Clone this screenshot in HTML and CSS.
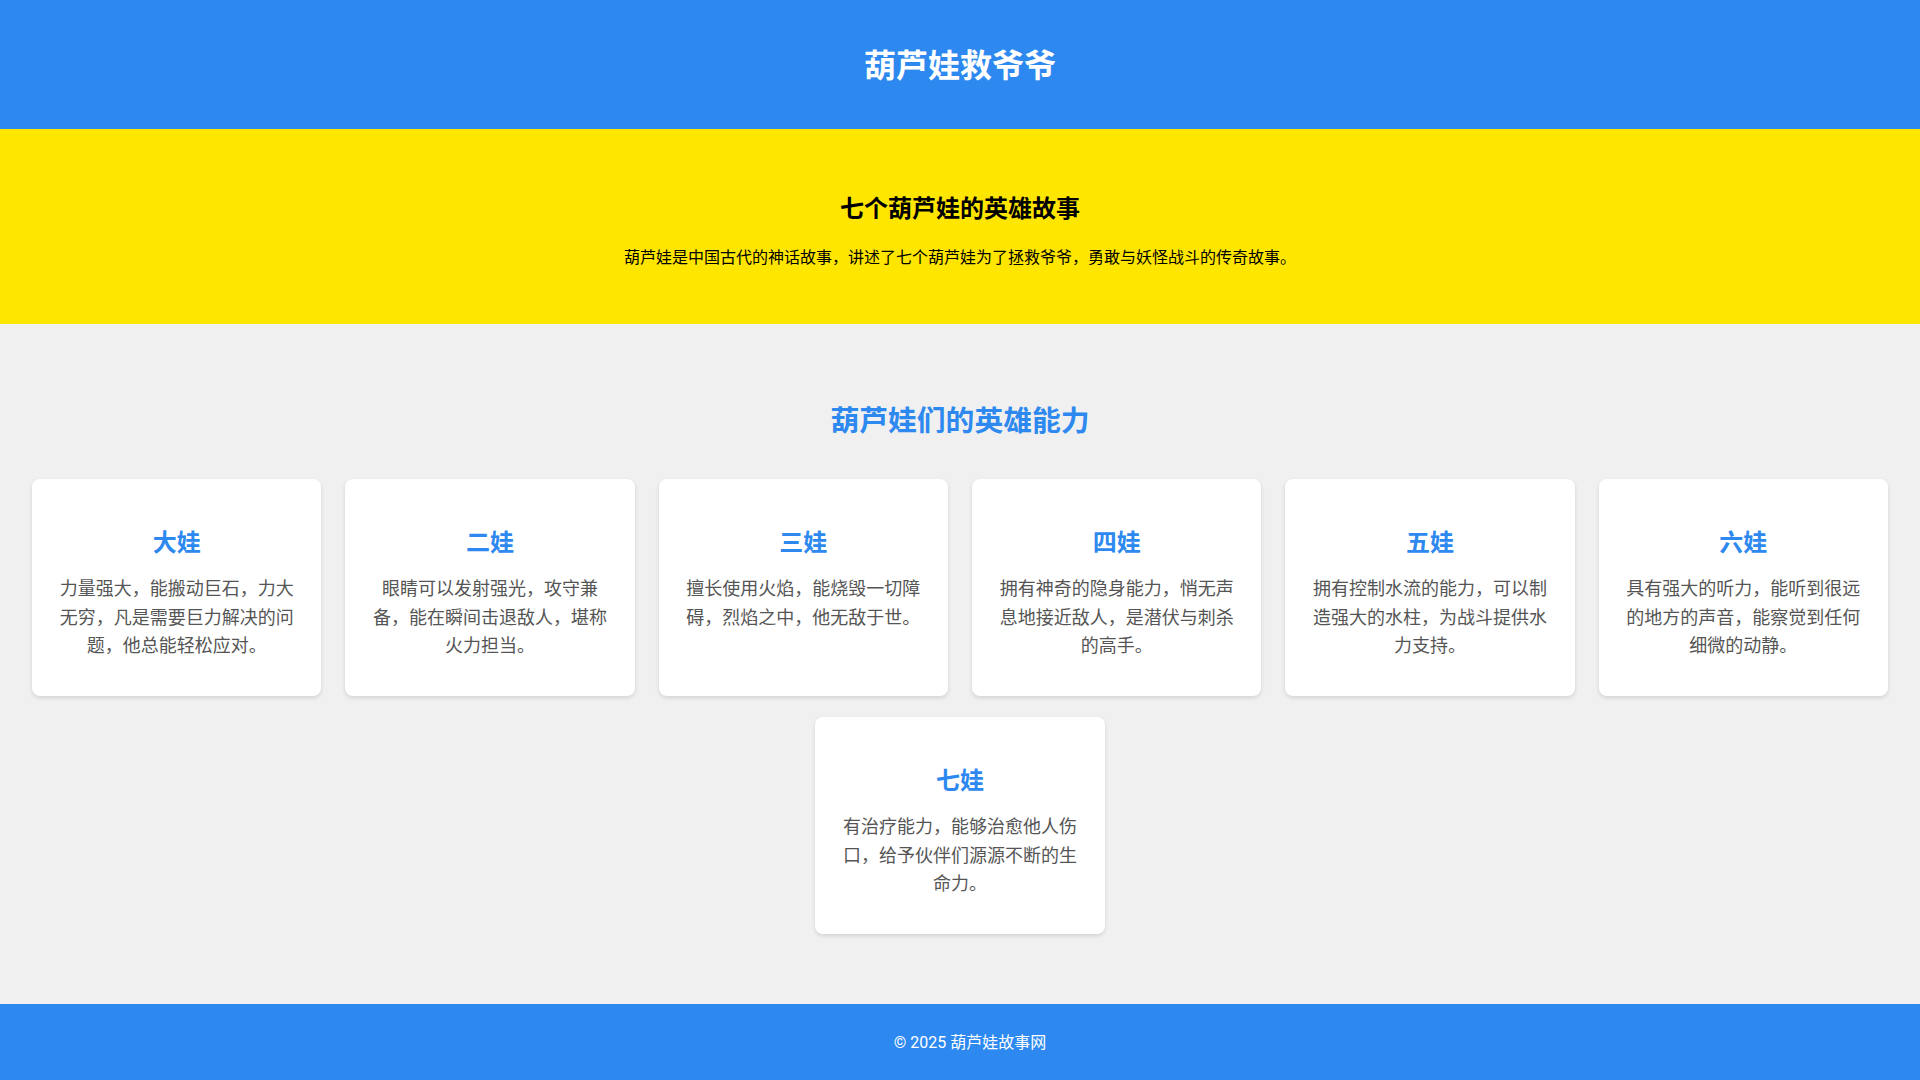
FILE: index.html
```html
<!DOCTYPE html>
<html lang="zh-CN">
<head>
  <meta charset="UTF-8">
  <meta name="viewport" content="width=device-width, initial-scale=1.0">
  <title>葫芦娃救爷爷</title>
  <link rel="stylesheet" href="styles.css">
</head>
<body>

<header class="site-header">
  <h1>葫芦娃救爷爷</h1>
</header>

<!-- Intro banner -->
<section class="intro">
  <h2>七个葫芦娃的英雄故事</h2>
  <p>葫芦娃是中国古代的神话故事，讲述了七个葫芦娃为了拯救爷爷，勇敢与妖怪战斗的传奇故事。</p>
</section>

<!-- Abilities -->
<section class="abilities">
  <h2>葫芦娃们的英雄能力</h2>
  <div class="card-list">
    <div class="card">
      <h3>大娃</h3>
      <p>力量强大，能搬动巨石，力大无穷，凡是需要巨力解决的问题，他总能轻松应对。</p>
    </div>
    <div class="card">
      <h3>二娃</h3>
      <p>眼睛可以发射强光，攻守兼备，能在瞬间击退敌人，堪称火力担当。</p>
    </div>
    <div class="card">
      <h3>三娃</h3>
      <p>擅长使用火焰，能烧毁一切障碍，烈焰之中，他无敌于世。</p>
    </div>
    <div class="card">
      <h3>四娃</h3>
      <p>拥有神奇的隐身能力，悄无声息地接近敌人，是潜伏与刺杀的高手。</p>
    </div>
    <div class="card">
      <h3>五娃</h3>
      <p>拥有控制水流的能力，可以制造强大的水柱，为战斗提供水力支持。</p>
    </div>
    <div class="card">
      <h3>六娃</h3>
      <p>具有强大的听力，能听到很远的地方的声音，能察觉到任何细微的动静。</p>
    </div>
    <div class="card">
      <h3>七娃</h3>
      <p>有治疗能力，能够治愈他人伤口，给予伙伴们源源不断的生命力。</p>
    </div>
  </div>
</section>

<footer class="site-footer">
  <p>&copy; 2025 葫芦娃故事网</p>
</footer>

</body>
</html>
```

FILE: styles.css
```css
body {
  margin: 0;
  font-family: Roboto, "Noto Sans CJK SC", sans-serif;
  line-height: 1.6;
  background-color: #f0f0f0;
  color: #222;
}

.site-header {
  background-color: #2d89ef;
  color: white;
  text-align: center;
  padding: 40px 20px 37px;
}

.site-header h1 {
  margin: 0;
  font-size: 32px;
  line-height: 52px;
}

.intro {
  background-color: #ffe600;
  color: #000;
  text-align: center;
  padding: 61px 20px 53px;
}

.intro h2 {
  margin: 0 0 17px;
  font-size: 24px;
}

.intro p {
  margin: 0;
  font-size: 16px;
}

.abilities {
  padding: 74px 32px 70px;
  text-align: center;
}

.abilities h2 {
  margin: 0 0 35px;
  font-size: 28.8px;
  color: #2d89ef;
}

.card-list {
  display: flex;
  flex-wrap: wrap;
  justify-content: center;
  gap: 21px 24px;
}

.card {
  width: calc((100% - 120px) / 6);
  box-sizing: border-box;
  padding: 45px 24px 36px;
  background-color: white;
  border-radius: 8px;
  box-shadow: 0 2px 4px rgba(0, 0, 0, 0.12);
}

.card h3 {
  margin: 0 0 13px;
  font-size: 24px;
  color: #2d89ef;
}

.card p {
  margin: 0;
  font-size: 18px;
  line-height: 28.2px;
  color: #555;
}

.site-footer {
  background-color: #2d89ef;
  color: white;
  text-align: center;
  padding: 26px 0 25px 20px;
}

.site-footer p {
  margin: 0;
  font-size: 16px;
}
```
